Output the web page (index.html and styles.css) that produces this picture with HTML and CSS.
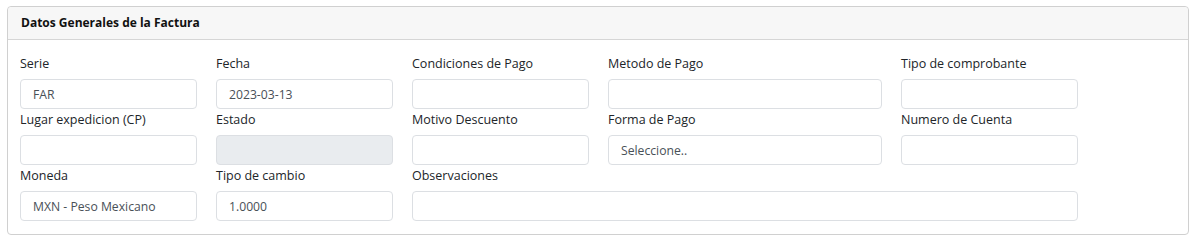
FILE: index.html
```html
<!DOCTYPE html>
<html lang="es">
<head>
  <meta charset="UTF-8">
  <title>Datos Generales de la Factura</title>
  <link rel="stylesheet" href="styles.css">
</head>
<body>
  <div class="card">
    <div class="card-header">Datos Generales de la Factura</div>
    <div class="card-body">
      <div class="field">
        <label>Serie</label>
        <div class="control">FAR</div>
      </div>
      <div class="field">
        <label>Fecha</label>
        <div class="control">2023-03-13</div>
      </div>
      <div class="field">
        <label>Condiciones de Pago</label>
        <div class="control"></div>
      </div>
      <div class="field">
        <label>Metodo de Pago</label>
        <div class="control"></div>
      </div>
      <div class="field">
        <label>Tipo de comprobante</label>
        <div class="control"></div>
      </div>

      <div class="field">
        <label>Lugar expedicion (CP)</label>
        <div class="control"></div>
      </div>
      <div class="field">
        <label>Estado</label>
        <div class="control disabled"></div>
      </div>
      <div class="field">
        <label>Motivo Descuento</label>
        <div class="control"></div>
      </div>
      <div class="field">
        <label>Forma de Pago</label>
        <div class="control">Seleccione..</div>
      </div>
      <div class="field">
        <label>Numero de Cuenta</label>
        <div class="control"></div>
      </div>

      <div class="field">
        <label>Moneda</label>
        <div class="control">MXN - Peso Mexicano</div>
      </div>
      <div class="field">
        <label>Tipo de cambio</label>
        <div class="control">1.0000</div>
      </div>
      <div class="field wide">
        <label>Observaciones</label>
        <div class="control"></div>
      </div>
    </div>
  </div>
</body>
</html>
```

FILE: styles.css
```css
body {
  margin: 0;
  padding: 6px 7px;
  background: #fff;
  font-family: 'Open Sans', 'Noto Sans', sans-serif;
  color: #212529;
}

.card {
  border: 1px solid #d0d0d0;
  border-radius: 4px;
  background: #fff;
}

.card-header {
  height: 32px;
  line-height: 32px;
  padding: 0 13px;
  background: #f7f7f7;
  border-bottom: 1px solid #d6d6d6;
  border-radius: 4px 4px 0 0;
  font-size: 12px;
  font-weight: bold;
  color: #111;
}

.card-body {
  display: grid;
  grid-template-columns: 177px 177px 177px 274px 177px;
  column-gap: 19px;
  padding: 13px 12px 13px;
}

.field {
  display: flex;
  flex-direction: column;
}

.field.wide {
  grid-column: 3 / 6;
}

.field label {
  font-size: 12.5px;
  line-height: 21px;
  margin-bottom: 5px;
}

.control {
  height: 30px;
  box-sizing: border-box;
  border: 1px solid #dcdfe3;
  border-radius: 4px;
  padding: 0 12px;
  line-height: 29px;
  font-size: 12.2px;
  color: #495057;
  background: #fff;
}

.control.disabled {
  background: #e9ecef;
}
```
